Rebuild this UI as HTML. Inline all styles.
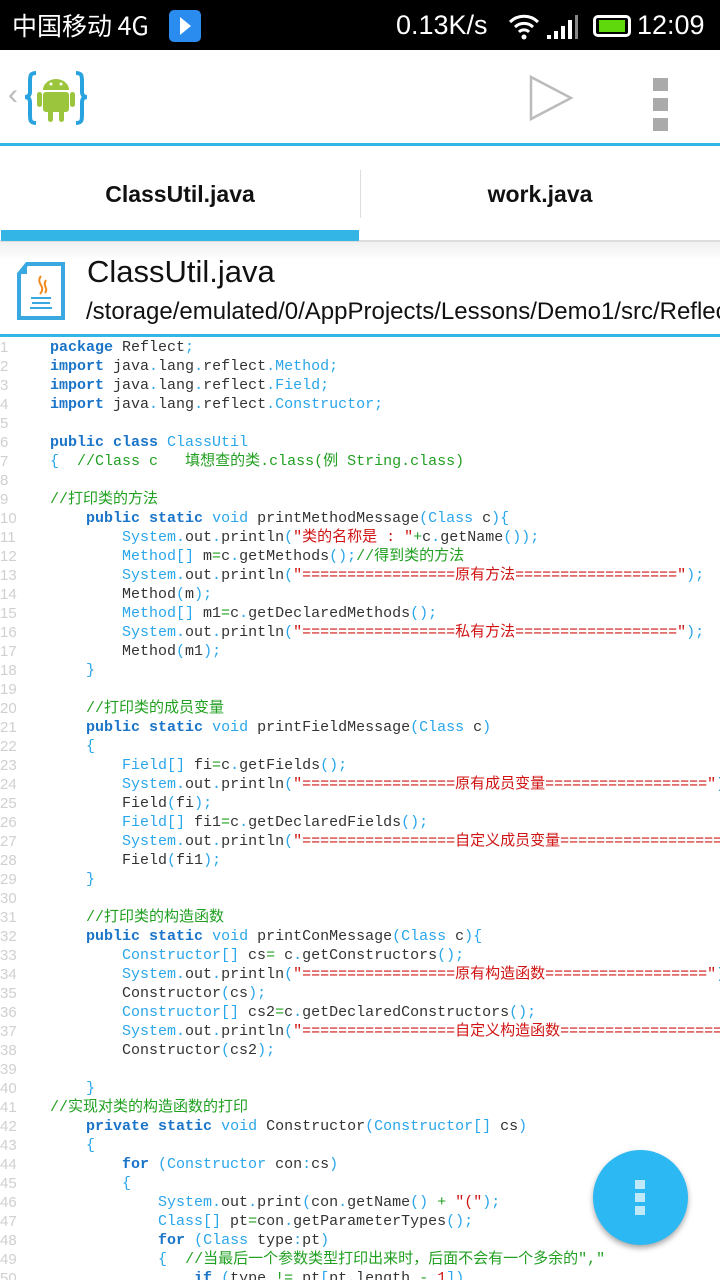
<!DOCTYPE html>
<html><head><meta charset="utf-8"><style>
*{margin:0;padding:0;box-sizing:border-box}
html,body{width:720px;height:1280px;overflow:hidden}
body{background:#fff;font-family:"Liberation Sans","Noto Sans CJK SC",sans-serif;position:relative}
.sb{position:absolute;left:0;top:0;width:720px;height:50px;background:#000;color:#fff;font-size:27px}
.tb{position:absolute;top:50px;left:0;width:720px;height:93px;background:#fff}
.bl{position:absolute;left:0;width:720px;height:3px;background:#33b5e5}
.tabs{position:absolute;top:146px;left:0;width:720px;height:96px;background:#fff;border-bottom:2px solid #ddd}
.tab{position:absolute;top:0;height:96px;width:360px;text-align:center;line-height:96px;font-size:23px;font-weight:bold;color:#111}
.hd{position:absolute;top:242px;left:0;width:720px;height:92px;background:linear-gradient(#f0f0f0,#fff 20%);overflow:hidden;white-space:nowrap}
.code{position:absolute;top:338px;left:0;width:720px;height:942px;overflow:hidden;font-family:"Liberation Mono","Noto Sans CJK SC",monospace;font-size:15px;line-height:19px;color:#333}
.ln{display:block;height:19px;position:relative;overflow:visible}
.n{position:absolute;left:0;width:40px;color:#d0d0d0;font-size:15px;font-family:"Liberation Sans",sans-serif}
.tx{position:absolute;left:50px;white-space:pre}
.k{color:#1a74c8;font-weight:bold;-webkit-text-stroke:0}
.t{color:#2aa6ea}
.c{color:#22a022}
.s{color:#d01414}
i{font-style:normal}
.fab{position:absolute;left:593px;top:1150px;width:95px;height:95px;border-radius:50%;background:#2cb8f3;box-shadow:0 3px 6px rgba(0,0,0,.35)}
.fab b{position:absolute;left:42px;width:10px;height:9px;background:#bfe9fb}
</style></head><body>
<div class="sb">
<span style="position:absolute;left:12px;top:8px;font-family:'Noto Sans CJK SC','Liberation Sans',sans-serif;font-size:25px;line-height:34px">中国移动 4G</span>
<div style="position:absolute;left:169px;top:10px;width:32px;height:32px;border-radius:5px;background:#2b8cf0"><div style="position:absolute;left:11px;top:7px;border-left:11px solid #fff;border-top:9px solid transparent;border-bottom:9px solid transparent"></div></div>
<span style="position:absolute;left:396px;top:8px;line-height:34px">0.13K/s</span>
<svg style="position:absolute;left:508px;top:12px" width="32" height="28" viewBox="0 0 32 28"><path d="M2 10 A20 20 0 0 1 30 10" stroke="#fff" stroke-width="3" fill="none"/><path d="M7 15 A13 13 0 0 1 25 15" stroke="#fff" stroke-width="3" fill="none"/><path d="M11 20 A7 7 0 0 1 21 20" stroke="#fff" stroke-width="3" fill="none"/><circle cx="16" cy="25" r="2.5" fill="#fff"/></svg>
<svg style="position:absolute;left:545px;top:14px" width="36" height="26"><rect x="2" y="21" width="4" height="4" fill="#fff"/><rect x="9" y="17" width="4" height="8" fill="#fff"/><rect x="16" y="12" width="4" height="13" fill="#fff"/><rect x="23" y="6" width="4" height="19" fill="#fff"/><rect x="30" y="1" width="3" height="24" fill="#888"/></svg>
<div style="position:absolute;left:593px;top:15px;width:38px;height:22px;border:3px solid #fff;border-radius:5px"><div style="position:absolute;left:3px;top:2px;width:26px;height:12px;background:#5fd80c"></div></div>
<span style="position:absolute;left:637px;top:8px;line-height:34px">12:09</span>
</div>
<div class="tb">
<span style="position:absolute;left:8px;top:28px;color:#bbb;font-size:30px">‹</span>
<svg style="position:absolute;left:24px;top:20px" width="66" height="56" viewBox="0 0 66 56"><path d="M12 3 C6 3 6 6 6 12 V22 C6 26 3 27 1 27 C3 27 6 28 6 32 V44 C6 50 6 53 12 53" stroke="#29a3e0" stroke-width="4" fill="none"/><path d="M52 3 C58 3 58 6 58 12 V22 C58 26 61 27 63 27 C61 27 58 28 58 32 V44 C58 50 58 53 52 53" stroke="#29a3e0" stroke-width="4" fill="none"/><path d="M19 20 A13 11 0 0 1 45 20 Z" fill="#9bc53c"/><rect x="19" y="22" width="26" height="20" rx="3" fill="#9bc53c"/><rect x="13" y="22" width="5" height="15" rx="2.5" fill="#9bc53c"/><rect x="46" y="22" width="5" height="15" rx="2.5" fill="#9bc53c"/><rect x="24" y="40" width="5" height="12" rx="2.5" fill="#9bc53c"/><rect x="35" y="40" width="5" height="12" rx="2.5" fill="#9bc53c"/><circle cx="27" cy="14" r="1.5" fill="#fff"/><circle cx="37" cy="14" r="1.5" fill="#fff"/></svg>
<svg style="position:absolute;left:528px;top:24px" width="48" height="48"><path d="M3 3 L43 24 L3 45 Z" stroke="#bbb" stroke-width="2.5" fill="none"/></svg>
<div style="position:absolute;left:653px;top:28px;width:15px;height:13px;background:#aaa"></div>
<div style="position:absolute;left:653px;top:48px;width:15px;height:13px;background:#aaa"></div>
<div style="position:absolute;left:653px;top:68px;width:15px;height:13px;background:#aaa"></div>
</div>
<div class="bl" style="top:143px"></div>
<div class="tabs">
<div class="tab" style="left:0">ClassUtil.java</div>
<div class="tab" style="left:360px">work.java</div>
<div style="position:absolute;left:360px;top:24px;width:1px;height:48px;background:#ddd"></div>
<div style="position:absolute;left:1px;top:84px;width:358px;height:11px;background:#33b5e5"></div>
</div>
<div class="hd">
<svg style="position:absolute;left:17px;top:20px" width="48" height="58" viewBox="0 0 48 58"><path d="M10 2 H46 V56 H2 V12 Z" fill="#fff" stroke="#3aa8e0" stroke-width="4"/><path d="M2 12 H10 V2" fill="#3aa8e0"/><path d="M24 14 C18 22 30 24 23 32 M29 18 C25 24 32 26 28 31" stroke="#f08a1c" stroke-width="2" fill="none"/><path d="M14 36 H34 M15 41 H33 M13 46 H35" stroke="#3aa8e0" stroke-width="2"/></svg>
<div style="position:absolute;left:87px;top:12px;font-size:31px;color:#111">ClassUtil.java</div>
<div style="position:absolute;left:86px;top:56px;font-size:24px;color:#111">/storage/emulated/0/AppProjects/Lessons/Demo1/src/Reflect</div>
</div>
<div class="bl" style="top:334px"></div>
<div class="code">
<span class="ln"><span class="n">1</span><span class="tx"><span class="k">package</span> Reflect<span class="t">;</span></span></span>
<span class="ln"><span class="n">2</span><span class="tx"><span class="k">import</span> java<span class="t">.</span>lang<span class="t">.</span>reflect<span class="t">.Method;</span></span></span>
<span class="ln"><span class="n">3</span><span class="tx"><span class="k">import</span> java<span class="t">.</span>lang<span class="t">.</span>reflect<span class="t">.Field;</span></span></span>
<span class="ln"><span class="n">4</span><span class="tx"><span class="k">import</span> java<span class="t">.</span>lang<span class="t">.</span>reflect<span class="t">.Constructor;</span></span></span>
<span class="ln"><span class="n">5</span></span>
<span class="ln"><span class="n">6</span><span class="tx"><span class="k">public class</span> <span class="t">ClassUtil</span></span></span>
<span class="ln"><span class="n">7</span><span class="tx"><span class="t">{</span>  <span class="c">//Class c   <i>填想查的类</i>.class(<i>例</i> String.class)</span></span></span>
<span class="ln"><span class="n">8</span></span>
<span class="ln"><span class="n">9</span><span class="tx"><span class="c">//<i>打印类的方法</i></span></span></span>
<span class="ln"><span class="n">10</span><span class="tx">    <span class="k">public static</span> <span class="t">void</span> printMethodMessage<span class="t">(Class</span> c<span class="t">){</span></span></span>
<span class="ln"><span class="n">11</span><span class="tx">        <span class="t">System.</span>out<span class="t">.</span>println<span class="t">(</span><span class="s">"<i>类的名称是</i> : "</span><span class="c">+</span>c<span class="t">.</span>getName<span class="t">());</span></span></span>
<span class="ln"><span class="n">12</span><span class="tx">        <span class="t">Method[]</span> m<span class="c">=</span>c<span class="t">.</span>getMethods<span class="t">();</span><span class="c">//<i>得到类的方法</i></span></span></span>
<span class="ln"><span class="n">13</span><span class="tx">        <span class="t">System.</span>out<span class="t">.</span>println<span class="t">(</span><span class="s">"=================<i>原有方法</i>=================="</span><span class="t">);</span></span></span>
<span class="ln"><span class="n">14</span><span class="tx">        Method<span class="t">(</span>m<span class="t">);</span></span></span>
<span class="ln"><span class="n">15</span><span class="tx">        <span class="t">Method[]</span> m1<span class="c">=</span>c<span class="t">.</span>getDeclaredMethods<span class="t">();</span></span></span>
<span class="ln"><span class="n">16</span><span class="tx">        <span class="t">System.</span>out<span class="t">.</span>println<span class="t">(</span><span class="s">"=================<i>私有方法</i>=================="</span><span class="t">);</span></span></span>
<span class="ln"><span class="n">17</span><span class="tx">        Method<span class="t">(</span>m1<span class="t">);</span></span></span>
<span class="ln"><span class="n">18</span><span class="tx">    <span class="t">}</span></span></span>
<span class="ln"><span class="n">19</span></span>
<span class="ln"><span class="n">20</span><span class="tx">    <span class="c">//<i>打印类的成员变量</i></span></span></span>
<span class="ln"><span class="n">21</span><span class="tx">    <span class="k">public static</span> <span class="t">void</span> printFieldMessage<span class="t">(Class</span> c<span class="t">)</span></span></span>
<span class="ln"><span class="n">22</span><span class="tx">    <span class="t">{</span></span></span>
<span class="ln"><span class="n">23</span><span class="tx">        <span class="t">Field[]</span> fi<span class="c">=</span>c<span class="t">.</span>getFields<span class="t">();</span></span></span>
<span class="ln"><span class="n">24</span><span class="tx">        <span class="t">System.</span>out<span class="t">.</span>println<span class="t">(</span><span class="s">"=================<i>原有成员变量</i>=================="</span><span class="t">);</span></span></span>
<span class="ln"><span class="n">25</span><span class="tx">        Field<span class="t">(</span>fi<span class="t">);</span></span></span>
<span class="ln"><span class="n">26</span><span class="tx">        <span class="t">Field[]</span> fi1<span class="c">=</span>c<span class="t">.</span>getDeclaredFields<span class="t">();</span></span></span>
<span class="ln"><span class="n">27</span><span class="tx">        <span class="t">System.</span>out<span class="t">.</span>println<span class="t">(</span><span class="s">"=================<i>自定义成员变量</i>=================="</span><span class="t">);</span></span></span>
<span class="ln"><span class="n">28</span><span class="tx">        Field<span class="t">(</span>fi1<span class="t">);</span></span></span>
<span class="ln"><span class="n">29</span><span class="tx">    <span class="t">}</span></span></span>
<span class="ln"><span class="n">30</span></span>
<span class="ln"><span class="n">31</span><span class="tx">    <span class="c">//<i>打印类的构造函数</i></span></span></span>
<span class="ln"><span class="n">32</span><span class="tx">    <span class="k">public static</span> <span class="t">void</span> printConMessage<span class="t">(Class</span> c<span class="t">){</span></span></span>
<span class="ln"><span class="n">33</span><span class="tx">        <span class="t">Constructor[]</span> cs<span class="c">=</span> c<span class="t">.</span>getConstructors<span class="t">();</span></span></span>
<span class="ln"><span class="n">34</span><span class="tx">        <span class="t">System.</span>out<span class="t">.</span>println<span class="t">(</span><span class="s">"=================<i>原有构造函数</i>=================="</span><span class="t">);</span></span></span>
<span class="ln"><span class="n">35</span><span class="tx">        Constructor<span class="t">(</span>cs<span class="t">);</span></span></span>
<span class="ln"><span class="n">36</span><span class="tx">        <span class="t">Constructor[]</span> cs2<span class="c">=</span>c<span class="t">.</span>getDeclaredConstructors<span class="t">();</span></span></span>
<span class="ln"><span class="n">37</span><span class="tx">        <span class="t">System.</span>out<span class="t">.</span>println<span class="t">(</span><span class="s">"=================<i>自定义构造函数</i>=================="</span><span class="t">);</span></span></span>
<span class="ln"><span class="n">38</span><span class="tx">        Constructor<span class="t">(</span>cs2<span class="t">);</span></span></span>
<span class="ln"><span class="n">39</span></span>
<span class="ln"><span class="n">40</span><span class="tx">    <span class="t">}</span></span></span>
<span class="ln"><span class="n">41</span><span class="tx"><span class="c">//<i>实现对类的构造函数的打印</i></span></span></span>
<span class="ln"><span class="n">42</span><span class="tx">    <span class="k">private static</span> <span class="t">void</span> Constructor<span class="t">(Constructor[]</span> cs<span class="t">)</span></span></span>
<span class="ln"><span class="n">43</span><span class="tx">    <span class="t">{</span></span></span>
<span class="ln"><span class="n">44</span><span class="tx">        <span class="k">for</span> <span class="t">(Constructor</span> con<span class="t">:</span>cs<span class="t">)</span></span></span>
<span class="ln"><span class="n">45</span><span class="tx">        <span class="t">{</span></span></span>
<span class="ln"><span class="n">46</span><span class="tx">            <span class="t">System.</span>out<span class="t">.</span>print<span class="t">(</span>con<span class="t">.</span>getName<span class="t">()</span> <span class="c">+</span> <span class="s">"("</span><span class="t">);</span></span></span>
<span class="ln"><span class="n">47</span><span class="tx">            <span class="t">Class[]</span> pt<span class="c">=</span>con<span class="t">.</span>getParameterTypes<span class="t">();</span></span></span>
<span class="ln"><span class="n">48</span><span class="tx">            <span class="k">for</span> <span class="t">(Class</span> type<span class="t">:</span>pt<span class="t">)</span></span></span>
<span class="ln"><span class="n">49</span><span class="tx">            <span class="t">{</span>  <span class="c">//<i>当最后一个参数类型打印出来时，后面不会有一个多余的</i>","</span></span></span>
<span class="ln"><span class="n">50</span><span class="tx">                <span class="k">if</span> <span class="t">(</span>type <span class="c">!=</span> pt<span class="t">[</span>pt<span class="t">.</span>length <span class="c">-</span> <span class="s">1</span><span class="t">])</span></span></span>
</div>
<div class="fab"><b style="top:30px"></b><b style="top:43px"></b><b style="top:56px"></b></div>
</body></html>
